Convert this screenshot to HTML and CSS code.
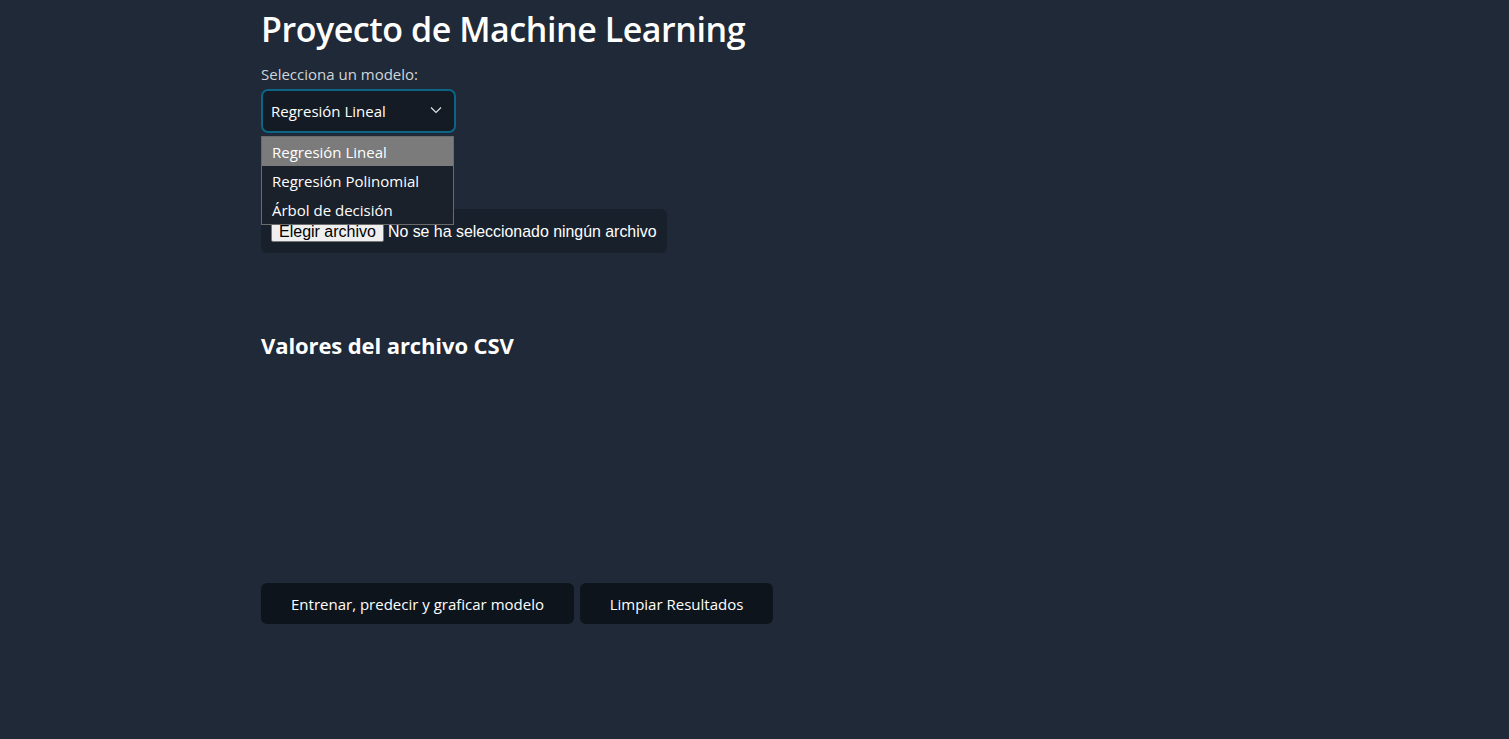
FILE: index.html
```html
<!DOCTYPE html>
<html lang="es">
<head>
<meta charset="utf-8">
<title>Proyecto de Machine Learning</title>
<link rel="stylesheet" href="styles.css">
</head>
<body>
<main class="container">
  <h1 class="title">Proyecto de Machine Learning</h1>
  <div class="field">
    <label class="label">Selecciona un modelo:</label>
    <div class="select-wrap">
      <div class="select">
        <span>Regresión Lineal</span>
        <svg class="chev" width="12" height="8" viewBox="0 0 12 8"><path d="M1 1.5 L6 6.5 L11 1.5" fill="none" stroke="#e5e7eb" stroke-width="1.1"/></svg>
      </div>
      <ul class="dropdown">
        <li class="opt active">Regresión Lineal</li>
        <li class="opt">Regresión Polinomial</li>
        <li class="opt">Árbol de decisión</li>
      </ul>
    </div>
  </div>
  <div class="file-box">
    <span class="file-btn">Elegir archivo</span>
    <span class="file-text">No se ha seleccionado ningún archivo</span>
  </div>
  <h2 class="subtitle">Valores del archivo CSV</h2>
  <div class="actions">
    <button class="btn btn-wide">Entrenar, predecir y graficar modelo</button>
    <button class="btn btn-narrow">Limpiar Resultados</button>
  </div>
</main>
</body>
</html>
```
FILE: styles.css
```css
html, body {
  margin: 0;
  padding: 0;
  background: #1f2937;
  height: 100%;
}
body {
  font-family: "Open Sans", "Noto Sans", sans-serif;
  color: #ffffff;
}
.container {
  width: 987px;
  margin: 0 auto;
  display: flex;
  flex-direction: column;
  align-items: flex-start;
}
.title {
  margin: 7px 0 0 0;
  font-size: 34px;
  font-weight: 600;
  line-height: 44px;
  letter-spacing: -0.45px;
}
.field {
  margin-top: 13px;
  display: flex;
  flex-direction: column;
}
.label {
  font-size: 15px;
  color: #d1d5db;
  line-height: 20px;
}
.select-wrap {
  position: relative;
  margin-top: 5px;
}
.select {
  box-sizing: border-box;
  width: 195px;
  height: 44px;
  border: 2px solid #0b6584;
  border-radius: 7px;
  background: #151b24;
  display: flex;
  align-items: center;
  justify-content: space-between;
  padding: 0 12px 0 8px;
  font-size: 15px;
  color: #ffffff;
}
.chev { margin-top: -3px; }
.dropdown {
  position: absolute;
  left: 0;
  top: 47px;
  margin: 0;
  padding: 0;
  list-style: none;
  box-sizing: border-box;
  width: 193px;
  background: #1b212a;
  border: 1px solid #6b6b6b;
  z-index: 2;
}
.opt {
  height: 29px;
  line-height: 30px;
  padding-left: 10px;
  font-size: 15px;
  color: #ffffff;
}
.opt.active { background: #7b7b7b; }
.file-box {
  margin-top: 76px;
  box-sizing: border-box;
  height: 44px;
  background: #18202b;
  border-radius: 6px;
  display: flex;
  align-items: center;
  padding: 2px 10px 0 10px;
  gap: 4px;
  white-space: nowrap;
  font-family: "Liberation Sans", Arial, sans-serif;
  font-size: 16px;
}
.file-btn {
  flex-shrink: 0;
  background: #efefef;
  color: #000;
  border: 1px solid #767676;
  border-radius: 2px;
  padding: 0 7px;
  font-size: 16px;
  line-height: 18px;
}
.file-text { color: #ffffff; flex-shrink: 0; font-size: 15.9px; }
.subtitle {
  margin: 77px 0 0 0;
  font-size: 22px;
  font-weight: 700;
  line-height: 30px;
  letter-spacing: -0.1px;
}
.actions {
  margin-top: 223px;
  display: flex;
  gap: 6px;
}
.btn {
  height: 41px;
  border: none;
  border-radius: 6px;
  background: #0d141c;
  color: #ffffff;
  font-family: "Open Sans", "Noto Sans", sans-serif;
  font-size: 15px;
}
.btn-wide { width: 313px; }
.btn-narrow { width: 193px; }
```
